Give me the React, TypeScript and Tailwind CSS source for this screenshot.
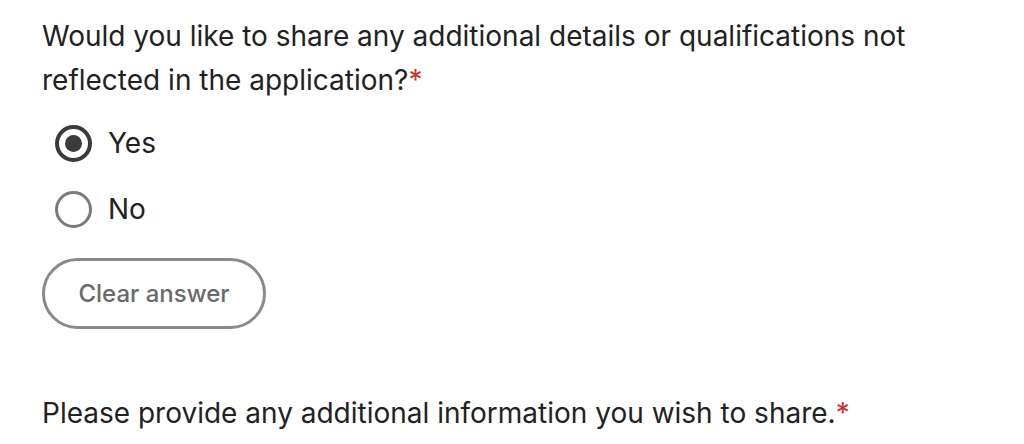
import React from "react";

export default function App() {
  return (
    <div
      className="w-[1024px] h-[444px] bg-white overflow-hidden pl-[42px] pt-[14px] text-[#222222]"
      style={{ fontFamily: "Inter, 'Noto Sans', sans-serif" }}
    >
      <p className="text-[28px] leading-[44px] w-[940px]">
        Would you like to share any additional details or qualifications not
        <br />
        reflected in the application?
        <span className="text-[#d0312d]">*</span>
      </p>
      <div className="flex flex-col mt-[23px] gap-[30px]">
        <label className="flex items-center gap-[16px] h-[36px] ml-[13px]">
          <span className="w-[37px] h-[37px] rounded-full border-[4px] border-[#3b3b3b] flex items-center justify-center">
            <span className="w-[17px] h-[17px] rounded-full bg-[#3b3b3b]" />
          </span>
          <span className="text-[28px]">Yes</span>
        </label>
        <label className="flex items-center gap-[16px] h-[36px] ml-[13px]">
          <span className="w-[37px] h-[37px] rounded-full border-[3px] border-[#7a7a7a]" />
          <span className="text-[28px]">No</span>
        </label>
      </div>
      <button className="mt-[31px] w-[224px] h-[71px] rounded-full border-[3px] border-[#8a8a8a] text-[#6a6a6a] text-[24px] font-medium">
        Clear answer
      </button>
      <p className="mt-[62px] text-[28px] leading-[44px]">
        Please provide any additional information you wish to share.
        <span className="text-[#d0312d]">*</span>
      </p>
    </div>
  );
}
